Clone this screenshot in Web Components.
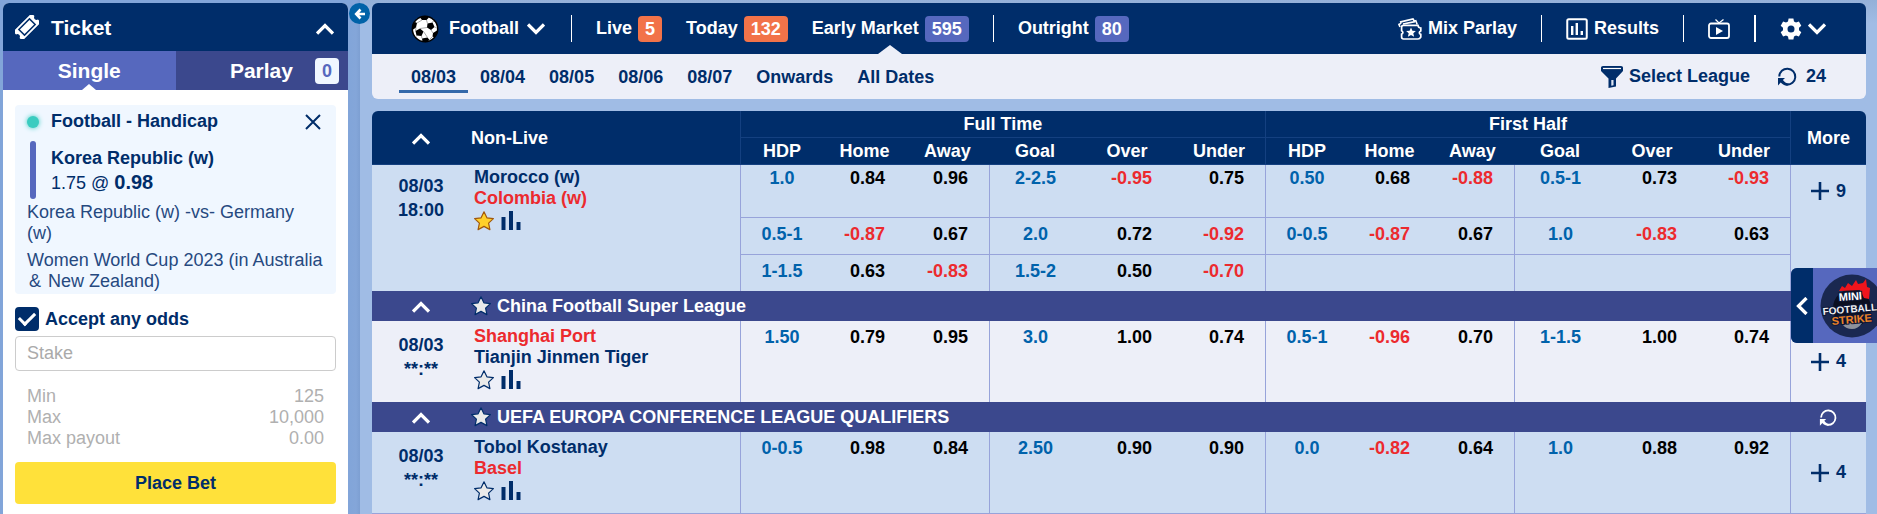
<!DOCTYPE html>
<html lang="en">
<head>
<meta charset="utf-8">
<meta name="viewport" content="width=device-width, initial-scale=1">
<title>Sportsbook</title>
<style>
  html {
    --navy: #002d6a;
    --ink: #002d6a;
    --indigo: #3b488d;
    --violet: #5668be;
    --orange: #f27349;
    --red: #ec2a2e;
    --blue: #0062ab;
    --row: #cdddf2;
    --row-alt: #edeff8;
    --line: #97a3da;
    --head-line: #144080;
  }
  body {
    margin: 0;
    font: 18px/21px "Liberation Sans", Arial, sans-serif;
    color: var(--ink);
    background: #a0bce5;
  }
</style>
</head>
<body>
<sports-app></sports-app>

<script>
const STAR = 'M10 .800 12.900 6.800l6.500.800-4.800 4.500 1.300 6.500L10 15.400l-5.900 3.200 1.300-6.500L.600 7.600 7.100 6.800z';
const ICONS = {
  up: [18, 18, '<path d="M1 13.500 9 5.500 17 13.500" fill="none" stroke="currentColor" stroke-width="3.300"/>'],
  down: [18, 18, '<path d="M1 4.500 9 12.500 17 4.500" fill="none" stroke="currentColor" stroke-width="3.300"/>'],
  left: [12, 18, '<path d="M10.500 1 2.500 9 10.500 17" fill="none" stroke="currentColor" stroke-width="3.300"/>'],
  back: [12, 12, '<path d="M6.500 1.500 2.200 6l4.300 4.500M2.500 6H11" fill="none" stroke="currentColor" stroke-width="2.600"/>'],
  close: [18, 18, '<path d="M2 2 16 16M16 2 2 16" fill="none" stroke="currentColor" stroke-width="2"/>'],
  plus: [18, 18, '<path d="M9 0V18M0 9H18" fill="none" stroke="currentColor" stroke-width="2.600"/>'],
  ticket: [24, 24, '<g transform="rotate(-45 12 12)"><path d="M-1 5.500H25v4a2.600 2.600 0 0 0 0 5v4H-1v-4a2.600 2.600 0 0 0 0-5z" fill="currentColor"/><rect x="4.500" y="8" width="15" height="8" fill="none" stroke="#002d6a" stroke-width="1.500"/></g>'],
  bars: [20, 20, '<path d="M.500 6h4v13h-4zM8 0h4v19H8zM15.500 11h4v8h-4z" fill="currentColor"/>'],
  star: [20, 20, `<path d="${STAR}" fill="#eaeaea" stroke="#002d6a" stroke-width="1.200" stroke-linejoin="round"/>`],
  gold: [20, 20, `<path d="${STAR}" fill="#ffd02a" stroke="#a2590b" stroke-width="1.200" stroke-linejoin="round"/>`],
  refresh: [20, 20, '<path d="M2.300 9.500A8 8 0 1 1 9.500 17.600" fill="none" stroke="currentColor" stroke-width="2"/><path d="M1 11h7L5.900 13.100C7.500 15.500 10 16.600 12 16.600l-2 2.200C7.500 18.600 5.500 17.500 3.700 15.600L1 18.500z" fill="currentColor"/>'],
  funnel: [22, 22, '<path d="M0 1.500Q0 0 2 0H20Q22 0 22 1.500V5L15 12.500V20.500L7.500 22V12.500L0 5z" fill="currentColor"/><path d="M2 2.500H20" stroke="#fff" stroke-width="1.200"/><path d="M10.300 14h2.200v5.200l-2.200.600z" fill="#dfe6f3"/>'],
  results: [22, 22, '<rect x="1.250" y="1.250" width="19.500" height="19.500" rx="1.500" fill="none" stroke="currentColor" stroke-width="2"/><path d="M5 8h2.400v9H5zM9.600 5H12v12H9.600zM14.600 13h2.400v4h-2.400z" fill="currentColor"/>'],
  tv: [22, 20, '<rect x="1" y="4.500" width="20" height="14.500" rx="2" fill="none" stroke="currentColor" stroke-width="1.800"/><path d="M7.500.500 11 4 15.500.500" fill="none" stroke="currentColor" stroke-width="1.300"/><path d="M8 8v8l7-4z" fill="currentColor"/>'],
  parlay: [24, 22, '<path d="M2 9 .900 6.400Q3.600 5.500 2.800 3.900L15 .900q.800 2.400 2.800 1.900l1.400 3.700M5 6 17 3.600" fill="none" stroke="currentColor" stroke-width="1.600"/><path d="M5.500 7.400H20q.400 2.600 2.800 2.600v3q-1.500.500-1.500 1.700t1.500 1.700v2.600q-1 2-2.800 2H5.500q-1.900 0-1.900-1.900v-3q1.300-.400 1.300-1.500T3.600 12.700V9.300q0-1.900 1.900-1.900z" fill="none" stroke="currentColor" stroke-width="1.700"/><path d="m13 9.600 1.400 3.200 3.500.300-2.600 2.200.800 3.400L13 16.900l-3.100 1.800.800-3.400-2.600-2.200 3.500-.300z" fill="currentColor"/>'],
  gear: [22, 22, '<path fill-rule="evenodd" d="M8.600.500h4.800l.600 3 2 1.100 2.900-1 2.400 4.100-2.300 2v2.500l2.300 2-2.400 4.200-2.900-1-2 1.100-.600 3H8.600l-.600-3-2-1.100-2.900 1L.700 14.200l2.300-2V9.700l-2.300-2 2.400-4.100 2.900 1 2-1.100zM11 7.500a3.500 3.500 0 1 0 0 7 3.500 3.500 0 0 0 0-7z" fill="currentColor"/>'],
  ball: [28, 28, '<circle cx="14" cy="14" r="12.700" fill="#fff" stroke="#000" stroke-width="1.500"/><path d="M9 2.500 14 .800 18 2.500 15.500 5 11 5zM16.500 8.500 21.500 7.500 23.500 12 20 15 16 12.500zM1.500 9.500 4 7 6 8 5 12.500 1.500 15zM4.500 16 9 13.500 12.500 16.500 10.500 21 5.500 20.500zM22 18 26 15.500 26.500 18 23.500 22.500 21.500 21.500zM11 23.500 16.500 22.500 18.500 25 15 27.300 11.500 26.500zM20 2.500 25 8 22.500 6z" fill="#000"/><path d="M11 5 6 8M15.500 5l1 3.500M5 12.500 4.500 16M9 13.500l7-1M12.500 16.500l4 6M20 15l2 3M10.500 21l.500 2.500M5.500 20.500 4.500 22M18.500 24.500l3-3M21.500 7.500l1-2M23.500 12 26 13" stroke="#888" stroke-width=".700"/>']
};

/* Attaches an open shadow root and fills it from a template. */
class Base extends HTMLElement {
  mount(css, html) {
    const t = document.createElement('template');
    t.innerHTML = `<style>
      *{box-sizing:border-box}
      button{font:inherit;color:inherit;background:none;border:0;padding:0;margin:0;cursor:pointer}
      a{color:inherit;text-decoration:none}
      ${css}</style>${html}`;
    this.attachShadow({ mode: 'open' }).append(t.content.cloneNode(true));
  }
}

customElements.define('app-icon', class extends Base {
  connectedCallback() {
    if (this.shadowRoot) return;
    const [w, h, body] = ICONS[this.getAttribute('name')];
    const s = Number(this.getAttribute('size')) || w;
    this.mount(`:host{display:inline-block;flex:none;line-height:0;vertical-align:middle} svg{display:block}`,
      `<svg width="${s}" height="${Math.round(h * s / w)}" viewBox="0 0 ${w} ${h}" aria-hidden="true">${body}</svg>`);
  }
});

customElements.define('count-badge', class extends Base {
  constructor() {
    super();
    this.mount(`:host{display:block;height:26px;line-height:26px;padding:0 7px;border-radius:4px;background:var(--violet);color:#fff;font-weight:bold}
      :host([tone=hot]){background:var(--orange)}
      :host([tone=light]){background:#f0f7ff;color:var(--violet)}`, `<slot></slot>`);
  }
});

customElements.define('bet-slip', class extends Base {
  constructor() {
    super();
    this.mount(`
      :host{display:block}
      .card{background:#f0f7ff;border-radius:4px;padding:6px 12px 2px}
      header{display:flex;align-items:center;justify-content:space-between;padding-right:2px}
      .title{display:flex;align-items:center;gap:12px;font-weight:bold}
      .dot{width:12px;height:12px;border-radius:50%;background:#3accc0;box-shadow:0 0 5px #3accc0}
      .pick{display:flex;gap:15px;margin:9px 0 3px 3px}
      .pick::before{content:"";width:6px;height:58px;border-radius:3px;background:var(--violet)}
      .pick div{padding-top:5px}
      .pick div>*{display:block;height:24px;line-height:24px}
      .pick .price{font-size:20px}
      p{margin:0;color:#26497f}
      p+p{margin-top:6px}
      .amp{padding:0 2px}
    `, `
      <section class="card">
        <header><span class="title"><i class="dot"></i><span>Football - Handicap</span></span>
          <button aria-label="Remove selection"><app-icon name="close"></app-icon></button></header>
        <div class="pick"><div><b>Korea Republic (w)</b><span>1.75 @ <b class="price">0.98</b></span></div></div>
        <p>Korea Republic (w) -vs- Germany (w)</p>
        <p>Women World Cup 2023 (in Australia <span class="amp">&amp;</span> New Zealand)</p>
      </section>`);
  }
});

customElements.define('bet-ticket', class extends Base {
  constructor() {
    super();
    this.mount(`
      :host{display:flex;flex-direction:column;flex:1;background:#fff;border-radius:6px 6px 0 0;overflow:hidden}
      .head{display:flex;align-items:center;height:48px;padding:0 14px 0 12px;background:var(--navy);color:#fff;font-size:21px;font-weight:bold}
      h1{font:inherit;margin:0 auto 0 12px}
      .tabs{display:grid;grid-template-columns:1fr 1fr;height:39px;color:#fff;font-size:21px;font-weight:bold}
      .tabs button{position:relative;background:var(--indigo)}
      .tabs .on{background:var(--violet)}
      .on::after{content:"";position:absolute;left:50%;bottom:0;margin-left:-7px;border:7px solid transparent;border-top:0;border-bottom:6px solid #fff}
      .tabs .parlay{display:flex;align-items:center;justify-content:flex-end;gap:22px;padding-right:9px}
      count-badge{font-size:18px}
      form{display:flex;flex-direction:column;padding:15px 12px 10px}
      .accept{display:flex;align-items:center;gap:6px;margin:13px 0 5px;font-weight:bold}
      .accept input{appearance:none;width:24px;height:24px;margin:0;border-radius:4px;background:var(--navy);display:grid;place-items:center}
      .accept input:checked::before{content:"";box-sizing:border-box;width:16px;height:10px;border:solid #fff;border-width:0 0 3px 3px;transform:translateY(-2px) rotate(-45deg)}
      .stake{width:100%;height:35px;border:1px solid #ccc;border-radius:4px;padding:0 11px;font:inherit;background:#fff}
      .stake::placeholder{color:#aaa;opacity:1}
      dl{display:grid;grid-template-columns:1fr auto;margin:15px 12px 13px;color:#b0b0b0}
      dd{margin:0;text-align:right}
      .place{height:42px;border-radius:4px;background:#ffe13a;font-weight:bold}
    `, `
      <div class="head"><app-icon name="ticket"></app-icon><h1>Ticket</h1><button aria-label="Collapse ticket"><app-icon name="up"></app-icon></button></div>
      <div class="tabs"><button class="on">Single</button><button class="parlay"><span>Parlay</span><count-badge tone="light">0</count-badge></button></div>
      <form>
        <bet-slip></bet-slip>
        <label class="accept"><input type="checkbox" checked><span>Accept any odds</span></label>
        <input class="stake" type="text" placeholder="Stake" aria-label="Stake">
        <dl><dt>Min</dt><dd>125</dd><dt>Max</dt><dd>10,000</dd><dt>Max payout</dt><dd>0.00</dd></dl>
        <button class="place" type="button">Place Bet</button>
      </form>`);
  }
});

customElements.define('sport-nav', class extends Base {
  constructor() {
    super();
    this.mount(`
      :host{display:flex;align-items:center;justify-content:space-between;height:51px;padding:0 40px 0 39px;background:var(--navy);color:#fff;font-weight:bold;border-radius:6px 6px 0 0}
      nav,.tools{display:flex;align-items:center;gap:24px;height:100%}
      a,button{display:flex;align-items:center;gap:6px;height:100%;white-space:nowrap;position:relative}
      .sport{gap:8px;padding-right:2px}
      .sport span{margin-left:2px}
      hr{width:1px;height:27px;margin:0;border:0;background:#fff}
      hr.thick{width:2px}
      .on::after{content:"";position:absolute;left:50%;bottom:0;margin-left:-12px;border:12px solid transparent;border-top:0;border-bottom:9px solid var(--row-alt)}
    `, `
      <nav>
        <button class="sport"><app-icon name="ball"></app-icon><span>Football</span><app-icon name="down"></app-icon></button>
        <hr>
        <a href="#live"><span>Live</span><count-badge tone="hot">5</count-badge></a>
        <a href="#today"><span>Today</span><count-badge tone="hot">132</count-badge></a>
        <a href="#early" class="on"><span>Early Market</span><count-badge>595</count-badge></a>
        <hr>
        <a href="#outright"><span>Outright</span><count-badge>80</count-badge></a>
      </nav>
      <div class="tools">
        <a href="#mix"><app-icon name="parlay"></app-icon><span>Mix Parlay</span></a>
        <hr>
        <a href="#results"><app-icon name="results"></app-icon><span>Results</span></a>
        <hr>
        <button aria-label="Live TV"><app-icon name="tv"></app-icon></button>
        <hr class="thick">
        <button aria-label="Settings"><app-icon name="gear"></app-icon><app-icon name="down"></app-icon></button>
      </div>`);
  }
});

customElements.define('date-nav', class extends Base {
  constructor() {
    super();
    const days = ['08/03', '08/04', '08/05', '08/06', '08/07', 'Onwards', 'All Dates'];
    this.mount(`
      :host{display:flex;align-items:flex-start;justify-content:space-between;height:45px;padding:0 40px 0 27px;background:var(--row-alt);font-weight:bold;border-radius:0 0 6px 6px}
      nav,.tools{display:flex;align-items:center}
      nav a{padding:13px 12px 2px;border-bottom:3px solid transparent}
      nav .on{border-color:#3469aa}
      .tools{height:100%;gap:27px}
      button{display:flex;align-items:center;gap:6px}
      .reload{gap:9px}
    `, `
      <nav>${days.map((d, i) => `<a href="#d${i}"${i ? '' : ' class="on"'}>${d}</a>`).join('')}</nav>
      <div class="tools">
        <button><app-icon name="funnel"></app-icon><span>Select League</span></button>
        <button class="reload"><app-icon name="refresh"></app-icon><span>24</span></button>
      </div>`);
  }
});

const MATCHES = [
  { date: '08/03', time: '18:00', teams: ['Morocco (w)', 'Colombia (w)'], fav: 1, saved: true, more: 9, lines: [
    ['1.0', '0.84', '0.96', '2-2.5', '-0.95', '0.75', '0.50', '0.68', '-0.88', '0.5-1', '0.73', '-0.93'],
    ['0.5-1', '-0.87', '0.67', '2.0', '0.72', '-0.92', '0-0.5', '-0.87', '0.67', '1.0', '-0.83', '0.63'],
    ['1-1.5', '0.63', '-0.83', '1.5-2', '0.50', '-0.70', '', '', '', '', '', '']] },
  { league: 'China Football Super League' },
  { date: '08/03', time: '**:**', teams: ['Shanghai Port', 'Tianjin Jinmen Tiger'], fav: 0, alt: true, more: 4, lines: [
    ['1.50', '0.79', '0.95', '3.0', '1.00', '0.74', '0.5-1', '-0.96', '0.70', '1-1.5', '1.00', '0.74']] },
  { league: 'UEFA EUROPA CONFERENCE LEAGUE QUALIFIERS', reload: true },
  { date: '08/03', time: '**:**', teams: ['Tobol Kostanay', 'Basel'], fav: 1, more: 4, lines: [
    ['0-0.5', '0.98', '0.84', '2.50', '0.90', '0.90', '0.0', '-0.82', '0.64', '1.0', '0.88', '0.92']] }
];

customElements.define('odds-table', class extends Base {
  constructor() {
    super();
    const cols = ['HDP', 'Home', 'Away', 'Goal', 'Over', 'Under'];
    const cell = (v, i) => {
      const line = i % 3 === 0;
      const cls = (line ? 'line' : 'odd') + (v[0] === '-' ? ' neg' : '');
      return `<td class="${cls}">${!v ? '' : line ? v : `<button>${v}</button>`}</td>`;
    };
    const league = m => `<tr class="league"><th><button aria-label="Collapse league"><app-icon name="up"></app-icon></button></th>
      <th class="name" colspan="13"><div><app-icon name="star"></app-icon><span>${m.league}</span></div></th>
      <th class="end">${m.reload ? '<button aria-label="Refresh league"><app-icon name="refresh" size="18"></app-icon></button>' : ''}</th></tr>`;
    const match = m => m.lines.map((l, n) => {
      const span = `rowspan="${m.lines.length}"`;
      const lead = n ? '' : `<td class="when" ${span}>${m.date}<br>${m.time}</td>
        <td class="teams" ${span}>${m.teams.map((t, i) => `<div${i === m.fav ? ' class="neg"' : ''}>${t}</div>`).join('')}
        <div class="marks"><button aria-label="Favourite"><app-icon name="${m.saved ? 'gold' : 'star'}"></app-icon></button><button aria-label="Statistics"><app-icon name="bars"></app-icon></button></div></td>`;
      const more = n ? '<td class="more"></td>' : `<td class="more"><button><app-icon name="plus"></app-icon><span>${m.more}</span></button></td>`;
      return `<tr class="${n ? 'sub' : 'lead'}${m.alt ? ' alt' : ''}">${lead}${l.map(cell).join('')}${more}</tr>`;
    }).join('');
    const group = '<col class="h"><col class="h"><col class="h"><col class="g"><col class="g"><col class="g">';
    this.mount(`
      :host{display:block;border-radius:6px 6px 0 0;overflow:hidden}
      table{width:100%;border-spacing:0;table-layout:fixed;font-weight:bold;border-bottom:1px solid var(--line)}
      td,th{padding:0}
      col.t{width:98px} col.h{width:83px} col.g{width:92px} col.m{width:76px}
      thead{background:var(--navy);color:#fff}
      thead tr:first-child{height:26px}
      thead tr:last-child{height:28px}
      thead th{border:0 solid var(--head-line)}
      thead .b{border-bottom-width:1px;padding-top:1px}
      thead .l{border-left-width:1px}
      thead .u{border-top-width:1px;border-bottom-width:1px}
      thead .name{text-align:left;padding-left:1px}
      td{vertical-align:top;border:0 solid var(--line)}
      tr.lead{height:81px;background:var(--row)}
      tr.sub{height:37px;background:var(--row)}
      tr.alt{background:var(--row-alt)}
      .lead td{padding-top:6px}
      .sub td{padding-top:6px;border-top-width:1px}
      .line{text-align:center;color:var(--blue);border-left-width:1px}
      .odd{text-align:right;padding-right:21px;color:#000}
      td.more{border-left-width:1px;border-top-width:0}
      .lead td.when{text-align:center;line-height:24px;padding-top:12px}
      .lead td.teams{padding:5px 0 0 4px}
      .lead td.more{vertical-align:middle;padding:0 0 0 20px}
      .more button{display:flex;align-items:center;gap:7px}
      .marks{display:flex;gap:7px;margin-top:1px}
      .marks button{display:block}
      .neg,.neg button{color:var(--red)}
      tbody tr:first-child{height:52px}
      tbody tr:first-child td{padding-top:3px}
      tbody tr:first-child td.teams{padding-top:2px}
      tbody tr:first-child td.when{padding-top:9px}
      tbody tr:first-child td.more{padding-top:0}
      .league{height:30px;background:var(--indigo);color:#fff}
      .league .name{text-align:left}
      .league .name div{display:flex;align-items:center;gap:6px;padding-left:1px}
      .league .end{padding-right:1px}
      th button{display:block;margin:0 auto}
    `, `
      <table>
        <colgroup><col class="t"><col>${group}${group}<col class="m"></colgroup>
        <thead>
          <tr><th rowspan="2" class="b"><button aria-label="Collapse all"><app-icon name="up"></app-icon></button></th>
            <th rowspan="2" class="b name">Non-Live</th><th colspan="6" class="l">Full Time</th><th colspan="6" class="l">First Half</th><th rowspan="2" class="b l">More</th></tr>
          <tr>${cols.concat(cols).map((c, i) => `<th class="u${i % 6 ? '' : ' l'}">${c}</th>`).join('')}</tr>
        </thead>
        <tbody>${MATCHES.map(m => m.league ? league(m) : match(m)).join('')}</tbody>
      </table>`);
  }
});

customElements.define('promo-float', class extends Base {
  constructor() {
    super();
    this.mount(`
      :host{display:flex;width:86px;height:75px;overflow:hidden;border-radius:6px 0 0 6px;background:var(--violet);color:#fff}
      button{display:grid;place-items:center;flex:none;width:22px;background:var(--navy)}
      a{flex:none;padding:6px 0 0 7px}
      svg{display:block}
    `, `
      <button aria-label="Show games"><app-icon name="left"></app-icon></button>
      <a href="#strike"><svg width="64" height="64" viewBox="0 0 64 64">
        <circle cx="32" cy="32" r="31.500" fill="#1a2850"/>
        <circle cx="32" cy="34" r="19" fill="#0b1021"/>
        <path d="M19 17 22 12 25 14 28 9 32 12 36 6 38 10 43 9 46 5 47 13 50 14 49 25 44 24 40 16z" fill="#f0151c"/>
        <path d="M23 51q9-3 19-2-4 6-10 6-6 0-9-4z" fill="#8d919b"/>
        <g font-family="Liberation Sans, Arial, sans-serif" font-weight="bold" stroke="#0d1838" stroke-width="2" paint-order="stroke">
          <text x="19" y="27" font-size="11" fill="#fff" transform="rotate(-4 19 27)">MINI</text>
          <text x="3" y="41" font-size="10" fill="#f2f2f2" transform="rotate(-5 3 41)">FOOTBALL</text>
          <text x="12" y="51" font-size="11" fill="#ee8327" transform="rotate(-5 12 51)">STRIKE</text>
        </g>
      </svg></a>`);
  }
});

customElements.define('sports-app', class extends Base {
  constructor() {
    super();
    this.mount(`
      :host{display:grid;grid-template-columns:360px minmax(0,1fr);min-height:100vh;position:relative;overflow:hidden}
      aside{display:flex;padding:3px 12px 0 3px;background:linear-gradient(90deg,#82a5d9 350px,#84a6d9 356px,#7d9fd2)}
      main{padding:3px 11px 0 12px;background:linear-gradient(#94b0d8,#a0bce5 24px)}
      odds-table{margin-top:12px}
      .toggle{position:absolute;left:349px;top:3px;width:21px;height:21px;border-radius:50%;background:#0062a8;color:#fff;display:grid;place-items:center}
      promo-float{position:absolute;right:0;top:268px}
    `, `
      <aside><bet-ticket></bet-ticket></aside>
      <main><sport-nav></sport-nav><date-nav></date-nav><odds-table></odds-table></main>
      <button class="toggle" aria-label="Hide sidebar"><app-icon name="back"></app-icon></button>
      <promo-float></promo-float>`);
  }
});
</script>
</body>
</html>
